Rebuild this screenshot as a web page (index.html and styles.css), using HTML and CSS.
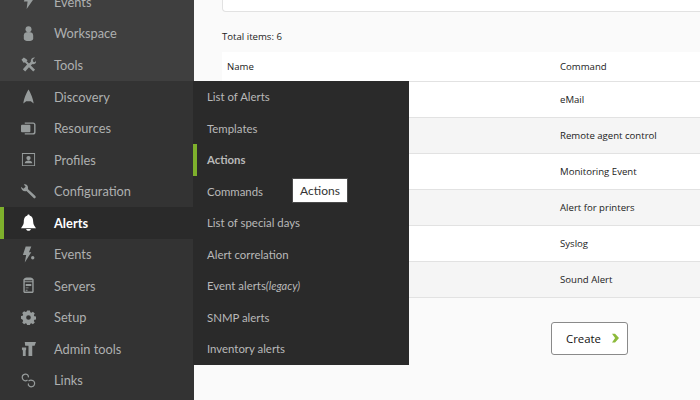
FILE: index.html
```html
<!DOCTYPE html>
<html lang="en">
<head>
<meta charset="utf-8">
<title>Alerts</title>
<link rel="stylesheet" href="styles.css">
</head>
<body>
<div class="app">
  <nav class="sidebar">
    <div class="group group-top">
      <div class="item item-first"><svg class="ico" viewBox="0 0 16 16"><path d="M6 0h7l-3 6h3L6 16l1-8H3z"/></svg><span>Events</span></div>
      <div class="item"><svg class="ico" viewBox="0 0 16 16"><circle cx="8" cy="3.500" r="3.200"/><path d="M3 10c0-2.500 2-3.500 5-3.500s5 1 5 3.500v3.500c0 1.500-2.500 2.500-5 2.500s-5-1-5-2.500z"/></svg><span>Workspace</span></div>
      <div class="item"><svg class="ico" viewBox="0 0 16 16"><path d="M.5 3 3 .5 5.500 2 7 3.500l-1 1 2.500 2.500 2-2c-.5-2.500 1.500-5 4.500-4.500l-2.500 2.500.5 2 2 .5L16.500 3c.5 3-2 5.500-4.500 4.500l-1.500 1.500 4.500 4.500-2 2-4.500-4.500-4 4.500-2.500-2.500L6.500 8 4 5.500 3 6.500z"/></svg><span>Tools</span></div>
    </div>
    <div class="group">
      <div class="item"><svg class="ico" viewBox="0 0 16 16"><path d="M8 .5c2 3 5 10 5.500 15L10.500 13h-5l-3 2.500C3 10.500 6 3.500 8 .5z"/></svg><span>Discovery</span></div>
      <div class="item"><svg class="ico" viewBox="0 0 16 16"><rect x="0" y="4" width="10" height="8" rx="1"/><path d="M4 1.500h9c1.500 0 2.500 1 2.500 2.500v8c0 1.500-1 2.500-2.500 2.500H4V13h8.500c1 0 1.500-.5 1.500-1.500v-7c0-1-.5-1.500-1.500-1.500H4z"/></svg><span>Resources</span></div>
      <div class="item"><svg class="ico" viewBox="0 0 16 16"><path fill-rule="evenodd" d="M1 1h14v14H1zm1 1v12h12V2z"/><circle cx="8" cy="6.500" r="2.300"/><path d="M4 12c0-2 2-3 4-3s4 1 4 3z"/></svg><span>Profiles</span></div>
      <div class="item"><svg class="ico" viewBox="0 0 16 16"><path d="M0 3 2.500 5 5 3 3 .5C5-.5 7.500 1 7.500 4c0 .5 0 1-.2 1.300l8 7.500c1 1 0 3-1.500 2.500l-8-7.800C3 8.500 0 6.500 0 3z"/></svg><span>Configuration</span></div>
      <div class="item item-active"><svg class="ico ico-bell" viewBox="0 0 16 18"><path d="M8 0c1 0 1.300.7 1.300 1.300 3 .7 3.700 3.700 3.700 6.700 0 3 2 5 3 6.500H0C1 13 3 11 3 8c0-3 .7-6 3.700-6.700C6.700.7 7 0 8 0z"/><path d="M5.500 15.500h5C10.500 18 5.500 18 5.500 15.500z"/></svg><span>Alerts</span></div>
      <div class="item"><svg class="ico ico-tall" viewBox="0 0 16 17"><path d="M5 0h6L8.500 6H11L4 17l1.500-8H2z"/><circle cx="12.500" cy="12" r="1.800"/></svg><span>Events</span></div>
      <div class="item"><svg class="ico ico-tall" viewBox="0 0 16 17"><path fill-rule="evenodd" d="M4 .5c2-.7 6-.7 8 0l1.500 1.500v13.500L12.500 16.500h-9L2.500 15.500V2zM4 5v10h8V5zm0-2v1h8V3zm1 4h6v2H5zm0 3.500h3v1H5zM5 13h2v1H5z"/></svg><span>Servers</span></div>
      <div class="item"><svg class="ico" viewBox="0 0 16 16"><path fill-rule="evenodd" d="M6.500 1.500h3l.4 1.800 1.200.5 1.600-1 2 2-1 1.600.5 1.200 1.800.4v3l-1.800.4-.5 1.200 1 1.600-2 2-1.600-1-1.200.5-.4 1.800h-3l-.4-1.800-1.200-.5-1.600 1-2-2 1-1.600-.5-1.200L0 10.400v-3l1.800-.4.500-1.200-1-1.600 2-2 1.600 1 1.200-.5zM8 6.500a2.500 2.500 0 1 0 0 5 2.500 2.500 0 0 0 0-5z" transform="translate(0 -1)"/></svg><span>Setup</span></div>
      <div class="item"><svg class="ico" viewBox="0 0 16 16"><path d="M4 1h12l-1.500 4H12v11H8V5H4.500z"/><path d="M1 7h4.500v2L5 10v6H2v-6l-1-1z"/></svg><span>Admin tools</span></div>
      <div class="item"><svg class="ico ico-line" viewBox="0 0 16 16"><path d="M7 7.500C5.500 8.500 3.500 8.500 2.200 7S1 3 2.500 2s4-1 5 .5c.5.800.5 1.500.3 2.200"/><path d="M8 8.500c1.500-1 3.500-1 5-.2s2 3 1 4.700-3.500 2.200-5 1.200-1.500-2-1-3"/></svg><span>Links</span></div>
    </div>
  </nav>
  <main class="content">
    <div class="filter-box"></div>
    <p class="total">Total items: 6</p>
    <table class="list">
      <thead><tr><th class="col-name">Name</th><th>Command</th></tr></thead>
      <tbody>
        <tr><td></td><td>eMail</td></tr>
        <tr><td></td><td>Remote agent control</td></tr>
        <tr><td></td><td>Monitoring Event</td></tr>
        <tr><td></td><td>Alert for printers</td></tr>
        <tr><td></td><td>Syslog</td></tr>
        <tr><td></td><td>Sound Alert</td></tr>
      </tbody>
    </table>
    <div class="actions">
      <button class="btn" type="button">Create<svg class="chev" viewBox="0 0 8 10"><path d="M0 0h3.500L8 5 3.500 10H0l3.500-5z"/></svg></button>
    </div>
  </main>
  <div class="submenu">
    <div class="sub-item">List of Alerts</div>
    <div class="sub-item">Templates</div>
    <div class="sub-item sub-active">Actions</div>
    <div class="sub-item">Commands</div>
    <div class="sub-item">List of special days</div>
    <div class="sub-item">Alert correlation</div>
    <div class="sub-item">Event alerts<em>(legacy)</em></div>
    <div class="sub-item">SNMP alerts</div>
    <div class="sub-item">Inventory alerts</div>
  </div>
  <div class="tooltip">Actions</div>
</div>
</body>
</html>
```
FILE: styles.css
```css
* { box-sizing: border-box; }
html, body { margin: 0; height: 100%; overflow: hidden; }
.app { position: relative; display: flex; width: 700px; height: 400px; overflow: hidden; background: #fafafa; font-family: "Open Sans", sans-serif; }
.sidebar { width: 194px; flex: none; background: #333; color: #aeb0b0; font: 12.8px "Lato", sans-serif; display: flex; flex-direction: column; }
.group { background: #333; }
.group-top { background: #3f3f3f; height: 81px; overflow: hidden; }
.item { height: 31.5px; display: flex; align-items: center; padding-left: 21px; gap: 17px; }
.item-first { margin-top: -14px; }
.ico { width: 15px; height: 15px; fill: #979c9c; flex: none; margin-right: 1px; }
.ico-bell { height: 18px; }
.ico-tall { height: 17px; }
.ico-line { fill: none; stroke: #979c9c; stroke-width: 1.3; }
.item-active { background: #2a2a2a; color: #fff; font-weight: 700; border-left: 4px solid #7eb02c; padding-left: 17px; }
.item-active .ico { fill: #fff; }
.content { flex: 1; min-width: 0; padding-left: 28px; color: #222; font-size: 9.6px; }
.filter-box { height: 12px; background: #fff; border: 1px solid #e2e2e2; border-top: 0; border-right: 0; border-radius: 0 0 0 4px; }
.total { margin: 0; height: 40px; padding-top: 18px; line-height: 13px; }
.list { width: 100%; border-collapse: collapse; background: #fff; table-layout: fixed; }
.list th { height: 29px; text-align: left; font-weight: 400; padding: 0 0 0 5px; }
.list th.col-name { width: 333px; }
.list td { height: 36px; padding: 0 0 0 5px; border-bottom: 1px solid #e2e2e2; }
.list thead tr { border-bottom: 1px solid #e2e2e2; }
.list tbody tr:nth-child(even) { background: #f5f5f5; }
.actions { display: flex; justify-content: flex-end; padding: 24px 72px 0 0; }
.btn { width: 77px; height: 33px; display: flex; align-items: center; gap: 11px; padding: 0 0 0 14px; background: #fff; border: 1px solid #8a8a8a; border-radius: 3px; font: 11.4px "Open Sans", sans-serif; color: #111; }
.chev { width: 7px; height: 10px; fill: #8cba3a; }
.submenu { position: absolute; left: 193px; top: 81px; width: 216px; height: 284px; background: #2a2a2a; color: #b9b9b9; font: 11.4px "Lato", sans-serif; }
.sub-item { height: 31.5px; display: flex; align-items: center; padding-left: 14px; }
.sub-item em { font-size: 11px; }
.sub-active { font-weight: 700; border-left: 4px solid #7eb02c; padding-left: 10px; }
.tooltip { position: absolute; left: 293px; top: 179px; width: 54px; height: 23px; background: #fff; color: #333; box-shadow: 0 0 0 1px #4a4a4a; display: flex; align-items: center; justify-content: center; font: 12px "Lato", sans-serif; }
```
